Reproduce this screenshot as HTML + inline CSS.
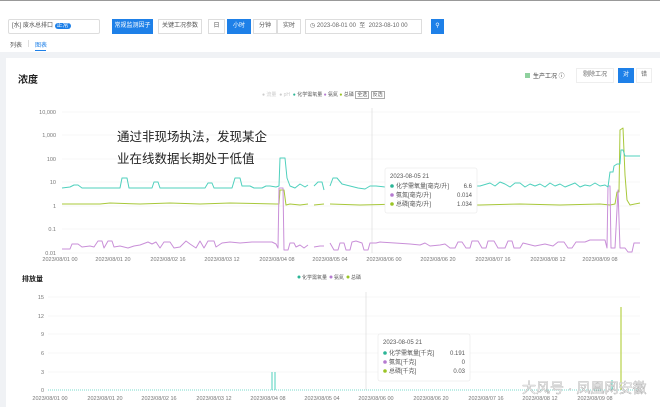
<!DOCTYPE html>
<html><head><meta charset="utf-8"><style>
*{margin:0;padding:0;box-sizing:border-box}
body{width:660px;height:407px;overflow:hidden;background:#f0f2f5;font-family:"Liberation Sans","Noto Sans CJK SC",sans-serif;position:relative;color:#333}
.a{position:absolute;white-space:nowrap}
</style></head><body>
<div class="a" style="left:0;top:0;width:660px;height:1px;background:#999"></div>
<div class="a" style="left:0;top:1px;width:660px;height:14px;background:#fff"></div>
<div class="a" style="left:0;top:15px;width:660px;height:37px;background:#fff"></div>
<div class="a" style="left:8px;top:19px;width:92px;height:15px;border:1px solid #ddd;border-radius:2px;font-size:6px;line-height:13px;padding-left:3px;color:#555">[水] 废水总排口 <span style="background:#1e80e8;color:#fff;border-radius:5px;padding:0 2px">正常</span></div>
<div class="a" style="left:112px;top:19px;width:41px;height:15px;background:#1e80e8;color:#fff;font-size:6px;line-height:15px;text-align:center">常规监测因子</div>
<div class="a" style="left:158px;top:19px;width:44px;height:15px;border:1px solid #ddd;font-size:6px;line-height:13px;text-align:center;color:#555">关键工况参数</div>
<div class="a" style="left:208px;top:19px;width:17px;height:15px;border:1px solid #ddd;font-size:6px;line-height:13px;text-align:center;color:#555">日</div>
<div class="a" style="left:227px;top:19px;width:24px;height:15px;background:#1e80e8;color:#fff;font-size:6px;line-height:15px;text-align:center">小时</div>
<div class="a" style="left:253px;top:19px;width:24px;height:15px;border:1px solid #ddd;font-size:6px;line-height:13px;text-align:center;color:#555">分钟</div>
<div class="a" style="left:277px;top:19px;width:24px;height:15px;border:1px solid #ddd;font-size:6px;line-height:13px;text-align:center;color:#555">实时</div>
<div class="a" style="left:305px;top:19px;width:117px;height:15px;border:1px solid #ddd;font-size:6px;line-height:13px;padding-left:4px;color:#666">◷ 2023-08-01 00 &nbsp;至&nbsp; 2023-08-10 00</div>
<div class="a" style="left:431px;top:19px;width:13px;height:15px;background:#1e80e8;color:#fff;font-size:6px;line-height:15px;text-align:center">⚲</div>
<div class="a" style="left:10px;top:40px;font-size:6px;color:#555">列表</div>
<div class="a" style="left:28px;top:40px;width:1px;height:7px;background:#ddd"></div>
<div class="a" style="left:35px;top:40px;font-size:6px;color:#1e80e8">图表</div>
<div class="a" style="left:35px;top:50px;width:11px;height:1px;background:#1e80e8"></div>
<div class="a" style="left:6px;top:58px;width:654px;height:349px;background:#fff"></div>
<div class="a" style="left:18px;top:71px;font-size:10px;font-weight:bold;color:#222">浓度</div>
<div class="a" style="left:525px;top:73px;width:5px;height:5px;background:#8fd19e"></div>
<div class="a" style="left:533px;top:71px;font-size:6px;color:#444">生产工况 ⓘ</div>
<div class="a" style="left:576px;top:68px;width:38px;height:15px;border:1px solid #eee;font-size:6px;line-height:13px;text-align:center;color:#666">剔除工况</div>
<div class="a" style="left:618px;top:68px;width:16px;height:15px;background:#1e80e8;color:#fff;font-size:6px;line-height:15px;text-align:center">对</div>
<div class="a" style="left:636px;top:68px;width:16px;height:15px;border:1px solid #eee;font-size:6px;line-height:13px;text-align:center;color:#666">错</div>
<div class="a" style="left:262px;top:91px;font-size:5px;color:#555;line-height:8px"><span style="color:#ccc">● 流量 &nbsp;● pH</span> &nbsp;<span style="color:#2bb596">●</span> 化学需氧量 <span style="color:#b57ad0">●</span> 氨氮 <span style="color:#9ac425">●</span> 总磷 <span style="border:1px solid #aaa;padding:0 1px">全选</span> <span style="border:1px solid #aaa;padding:0 1px">反选</span></div>

<svg class="a" style="left:0;top:0" width="660" height="407" font-family="Liberation Sans, Noto Sans CJK SC, sans-serif">
<g stroke="#f0f0f0" stroke-width="0.6">
<line x1="62" y1="112" x2="640" y2="112"/><line x1="62" y1="135" x2="640" y2="135"/><line x1="62" y1="159" x2="640" y2="159"/><line x1="62" y1="182" x2="640" y2="182"/><line x1="62" y1="206" x2="640" y2="206"/><line x1="62" y1="229" x2="640" y2="229"/><line x1="62" y1="253" x2="640" y2="253"/>
<line x1="48" y1="297" x2="640" y2="297"/><line x1="48" y1="316" x2="640" y2="316"/><line x1="48" y1="334" x2="640" y2="334"/><line x1="48" y1="353" x2="640" y2="353"/><line x1="48" y1="372" x2="640" y2="372"/>
</g>
<line x1="372" y1="108" x2="372" y2="253" stroke="#ddd" stroke-width="0.7"/>
<line x1="366" y1="292" x2="366" y2="390" stroke="#ddd" stroke-width="0.7"/>
<g font-size="5.5" fill="#777" text-anchor="end">
<text x="56" y="114">10,000</text><text x="56" y="137">1,000</text><text x="56" y="161">100</text><text x="56" y="184">10</text><text x="56" y="208">1</text><text x="56" y="231">0.1</text><text x="56" y="255">0.01</text>
<text x="44" y="299">15</text><text x="44" y="318">12</text><text x="44" y="336">9</text><text x="44" y="355">6</text><text x="44" y="374">3</text><text x="44" y="392">0</text>
</g>
<g font-size="5.5" fill="#777" text-anchor="middle">
<text x="60" y="261">2023/08/01 00</text><text x="113" y="261">2023/08/01 20</text><text x="168" y="261">2023/08/02 16</text><text x="222" y="261">2023/08/03 12</text><text x="277" y="261">2023/08/04 08</text><text x="330" y="261">2023/08/05 04</text><text x="384" y="261">2023/08/06 00</text><text x="438" y="261">2023/08/06 20</text><text x="493" y="261">2023/08/07 16</text><text x="548" y="261">2023/08/08 12</text><text x="600" y="261">2023/08/09 08</text>
<text x="50" y="400">2023/08/01 00</text><text x="105" y="400">2023/08/01 20</text><text x="159" y="400">2023/08/02 16</text><text x="214" y="400">2023/08/03 12</text><text x="268" y="400">2023/08/04 08</text><text x="322" y="400">2023/08/05 04</text><text x="376" y="400">2023/08/06 00</text><text x="431" y="400">2023/08/06 20</text><text x="486" y="400">2023/08/07 16</text><text x="540" y="400">2023/08/08 12</text><text x="595" y="400">2023/08/09 08</text>
</g>
<g fill="none" stroke-width="1" stroke-linejoin="round">
<polyline stroke="#a8c83a" points="62,204 100,204 110,203 140,204 170,203 200,204 230,203 276,204 279,204 280,190 284,190 286,205 290,204 300,205 308,204"/>
<polyline stroke="#a8c83a" points="314,205 324,204"/>
<polyline stroke="#a8c83a" points="330,204 360,205 400,204 440,205 480,205 520,204 560,205 600,204 610,205 615,204 617,192 619,192 620,130 623,128 625,175 627,200 630,205 640,203"/>
<polyline stroke="#c98fd8" points="62,249 70,249 72,244 78,244 82,247 90,246 94,247 98,241 102,241 104,248 108,241 112,241 114,247 120,246 128,248 134,246 140,245 148,242 152,244 156,242 160,248 164,242 170,242 174,248 180,247 186,241 190,244 196,248 200,241 204,248 208,241 214,241 216,247 222,243 230,242 240,243 252,242 268,242 272,242 276,244 278,248 279,188 283,188 284,250 288,250 290,243 294,243 296,247 300,245 304,248 308,245"/>
<polyline stroke="#c98fd8" points="314,247 320,246 324,246"/>
<polyline stroke="#c98fd8" points="330,243 334,250 338,250 340,243 344,243 346,250 350,250 352,242 356,241 362,243 364,250 368,250 370,243 376,243 380,242 395,243 410,244 420,245 425,243 430,246 440,245 445,244 450,248 455,248 458,242 462,242 466,248 470,248 472,241 478,241 482,248 486,248 488,241 494,241 498,248 505,248 508,241 512,241 514,248 520,248 523,243 535,246 545,244 553,246 558,242 564,242 568,248 572,248 576,242 585,242 590,240 600,240 605,240 607,248 608,186 610,186 611,248 615,248 618,190 620,248 625,248 628,252 632,252 634,243 640,243"/>
<polyline stroke="#4fd0bd" points="62,188 70,187 74,185 78,185 82,188 120,188 122,178 127,178 129,188 152,188 154,182 158,182 160,188 205,188 208,183 212,183 214,188 232,188 235,178 240,178 242,186 250,186 254,188 262,188 266,186 270,186 276,187 279,186 280,158 285,158 287,178 290,186 295,188 300,184 305,187 308,185"/>
<polyline stroke="#4fd0bd" points="314,186 318,182 322,182 324,190"/>
<polyline stroke="#4fd0bd" points="330,186 333,178 337,178 342,184 350,186 358,188 365,189 370,186 376,186 385,187 400,185 420,187 440,186 470,186 480,186 490,183 495,186 500,182 505,184 510,187 515,183 520,183 525,187 530,184 535,186 540,184 545,187 550,183 555,186 560,184 565,187 570,185 575,183 580,187 585,185 590,186 595,183 600,186 605,185 608,187 610,172 613,172 614,166 617,164 620,164 621,150 623,150 625,156 640,156"/>
<line x1="48" y1="390" x2="640" y2="390" stroke="#4fd0bd" stroke-width="0.8" stroke-dasharray="1 1"/>
<line x1="272" y1="390" x2="272" y2="372" stroke="#4fd0bd"/>
<line x1="275" y1="390" x2="275" y2="372" stroke="#4fd0bd"/>
<line x1="612" y1="390" x2="612" y2="380" stroke="#4fd0bd"/>
<line x1="617" y1="390" x2="617" y2="382" stroke="#4fd0bd"/>
<line x1="621" y1="390" x2="621" y2="307" stroke="#b8d24a" stroke-width="1.2"/>
</g>
<rect x="385" y="168" width="92" height="45" rx="2" fill="#fff" stroke="#e6e6e6" stroke-width="0.6"/>
<g font-size="6" fill="#555">
<text x="390" y="178">2023-08-05 21</text>
<circle cx="392" cy="186" r="1.8" fill="#2bb596"/><text x="396" y="188">化学需氧量[毫克/升]</text><text x="472" y="188" text-anchor="end">6.6</text>
<circle cx="392" cy="195" r="1.8" fill="#b57ad0"/><text x="396" y="197">氨氮[毫克/升]</text><text x="472" y="197" text-anchor="end">0.014</text>
<circle cx="392" cy="204" r="1.8" fill="#9ac425"/><text x="396" y="206">总磷[毫克/升]</text><text x="472" y="206" text-anchor="end">1.034</text>
</g>
<rect x="378" y="334" width="92" height="47" rx="2" fill="#fff" stroke="#e6e6e6" stroke-width="0.6"/>
<g font-size="6" fill="#555">
<text x="383" y="344">2023-08-05 21</text>
<circle cx="385" cy="353" r="1.8" fill="#2bb596"/><text x="389" y="355">化学需氧量[千克]</text><text x="465" y="355" text-anchor="end">0.191</text>
<circle cx="385" cy="362" r="1.8" fill="#b57ad0"/><text x="389" y="364">氨氮[千克]</text><text x="465" y="364" text-anchor="end">0</text>
<circle cx="385" cy="371" r="1.8" fill="#9ac425"/><text x="389" y="373">总磷[千克]</text><text x="465" y="373" text-anchor="end">0.03</text>
</g>
<text x="22" y="281" font-size="7" font-weight="bold" fill="#222">排放量</text>
<g font-size="5" fill="#555"><circle cx="299" cy="277" r="1.5" fill="#2bb596"/><text x="302" y="279">化学需氧量</text><circle cx="331" cy="277" r="1.5" fill="#b57ad0"/><text x="334" y="279">氨氮</text><circle cx="348" cy="277" r="1.5" fill="#9ac425"/><text x="351" y="279">总磷</text></g>
<text x="117" y="141" font-size="12.5" fill="#222">通过非现场执法，发现某企</text>
<text x="117" y="163" font-size="12.5" fill="#222">业在线数据长期处于低值</text>
<text x="522" y="393" font-size="14" fill="#fafafa" stroke="#999" stroke-width="0.35">大风号 · 凤凰网安徽</text>
</svg>
</body></html>
